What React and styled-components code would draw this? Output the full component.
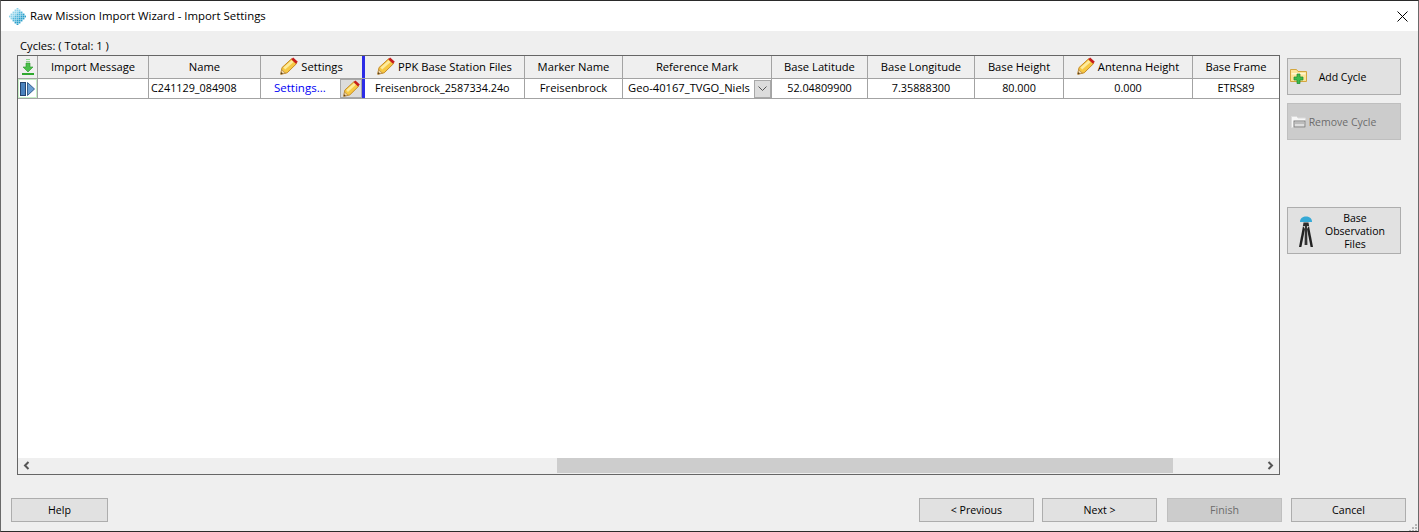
import React from "react";
import styled, { createGlobalStyle } from "styled-components";

const GlobalStyle = createGlobalStyle`
  html, body { margin: 0; padding: 0; background: #fff; }
  body { font-family: "Open Sans", "Noto Sans", sans-serif; font-size: 11.2px; color: #000; }
`;

const columns = "20px 111px 112px 104px 160px 98px 149px 96px 107px 89px 129px 86px";

const Pencil = ({ size = 18 }) => (
  <svg width={size} height={size} viewBox="0 0 18 18">
    <path d="M0.8 17.2 L2 10.6 L11.6 1.8 L16.6 6.6 L7.2 15.8 Z" fill="#f6c844" stroke="#c58a26" strokeWidth="1" strokeLinejoin="round" />
    <path d="M3.4 10.6 L11.6 3.2 L13.6 5 L5.2 12.6 Z" fill="#fdeb9c" />
    <path d="M0.8 17.2 L1.6 12.6 L5.4 16.2 Z" fill="#f0d6a8" stroke="#a87830" strokeWidth="0.6" />
    <path d="M0.8 17.2 L1.2 15 L3 16.7 Z" fill="#5a4020" />
    <path d="M11.2 2.2 L13.2 0.4 L17.8 4.8 L15.9 6.8 Z" fill="#c61c1c" />
  </svg>
);

const DownloadArrow = () => (
  <svg width="12" height="16" viewBox="0 0 12 16">
    <path d="M4 0h4v1H4zM4 2h4v1H4z" fill="#8fd48f" />
    <path d="M4 4h4v4h3l-5 5-5-5h3z" fill="#4cc04c" stroke="#2a962a" strokeWidth="0.6" />
    <path d="M0 14h12v2H0z" fill="#2ea82e" />
  </svg>
);

const PlayBar = () => (
  <svg width="15" height="14" viewBox="0 0 15 14">
    <rect x="0.5" y="0.5" width="5" height="13" fill="#4a82bd" stroke="#24446f" />
    <path d="M7.5 0.5 L14.5 7 L7.5 13.5 Z" fill="#6b9fd3" stroke="#34608f" />
  </svg>
);

const DotLogo = () => {
  const dots = [];
  for (let r = -4; r <= 4; r++) {
    for (let c = -4; c <= 4; c++) {
      if (Math.abs(r) + Math.abs(c) <= 4) {
        dots.push(
          <rect
            key={`${r}-${c}`}
            x={8 + c * 1.9 - 0.85}
            y={8 + r * 1.9 - 0.85}
            width="1.7"
            height="1.7"
            fill={c + r < -1 ? "#8ed2ea" : c + r > 1 ? "#2a9fca" : "#4fb5da"}
          />
        );
      }
    }
  }
  return (
    <svg width="17" height="17" viewBox="0 0 16 16">
      {dots}
    </svg>
  );
};

const CloseIcon = () => (
  <svg width="11" height="11" viewBox="0 0 11 11">
    <path d="M0.5 0.5 L10.5 10.5 M10.5 0.5 L0.5 10.5" stroke="#000" strokeWidth="1" />
  </svg>
);

const FolderPlus = () => (
  <svg width="17" height="15" viewBox="0 0 17 15">
    <path d="M0.5 0.5h6l1.5 2h8.5v10h-16z" fill="#fbe49a" stroke="#d3a63f" />
    <path d="M1.5 4h14v1.5h-14z" fill="#fff6cf" />
    <path d="M7 5h3v3h3v3h-3v3.5H7V11H4V8h3z" fill="#3dbb4b" stroke="#1b8a2c" strokeWidth="0.7" />
  </svg>
);

const FolderMinus = () => (
  <svg width="15" height="12" viewBox="0 0 15 12">
    <path d="M0.5 0.5h5l1.5 1.5h7.5v9.5h-14z" fill="#f7f7f7" stroke="#dcdcdc" />
    <rect x="3" y="5" width="11" height="6" fill="#dedede" stroke="#7f7f7f" />
    <path d="M4 7h9" stroke="#9a9a9a" />
  </svg>
);

const Tripod = () => (
  <svg width="18" height="31" viewBox="0 0 18 31">
    <path d="M3 6 C3 2 6 0.5 9 0.5 C12 0.5 15 2 15 6 Z" fill="#35a9d6" />
    <path d="M6.5 6.5h5l0.6 3.5H5.9z" fill="#2b2b2b" />
    <path d="M6 10 L2 31 L4.4 31 L8 13 Z" fill="#222" />
    <path d="M12 10 L16 31 L13.6 31 L10 13 Z" fill="#222" />
    <path d="M7.9 10h2.2l0.3 19H7.6z" fill="#333" />
  </svg>
);

const Chevron = ({ left }) => (
  <svg width="7" height="9" viewBox="0 0 7 9">
    <path d={left ? "M5.5 1 L2 4.5 L5.5 8" : "M1.5 1 L5 4.5 L1.5 8"} fill="none" stroke="#555" strokeWidth="2" />
  </svg>
);

const ComboChevron = () => (
  <svg width="9" height="5" viewBox="0 0 9 5">
    <path d="M0.5 0.5 L4.5 4.5 L8.5 0.5" fill="none" stroke="#555" strokeWidth="1" />
  </svg>
);

const App = () => {
  return (
    <>
      <GlobalStyle />
      <Window>
        <TitleBar>
          <TitleGroup>
            <DotLogo />
            <TitleText>Raw Mission Import Wizard - Import Settings</TitleText>
          </TitleGroup>
          <CloseIcon />
        </TitleBar>
        <Content>
          <CyclesLabel>Cycles: ( Total: 1 )</CyclesLabel>
          <MainRow>
            <TablePanel>
              <GridArea>
                <HeaderRow>
                  <GreenCell><DownloadArrow /></GreenCell>
                  <HeaderCell>Import Message</HeaderCell>
                  <HeaderCell>Name</HeaderCell>
                  <HeaderCell $frozen><Pencil />Settings</HeaderCell>
                  <HeaderCell><Pencil />PPK Base Station Files</HeaderCell>
                  <HeaderCell>Marker Name</HeaderCell>
                  <HeaderCell>Reference Mark</HeaderCell>
                  <HeaderCell>Base Latitude</HeaderCell>
                  <HeaderCell>Base Longitude</HeaderCell>
                  <HeaderCell>Base Height</HeaderCell>
                  <HeaderCell><Pencil />Antenna Height</HeaderCell>
                  <HeaderCell $last>Base Frame</HeaderCell>
                </HeaderRow>
                <DataRow>
                  <RowMarker><PlayBar /></RowMarker>
                  <DataCell />
                  <DataCell $left $num>C241129_084908</DataCell>
                  <SettingsCell $frozen>
                    <SettingsLink>Settings...</SettingsLink>
                    <EditButton><Pencil size={17} /></EditButton>
                  </SettingsCell>
                  <FileCell $num>Freisenbrock_2587334.24o</FileCell>
                  <DataCell>Freisenbrock</DataCell>
                  <ComboCell>
                    <span>Geo-40167_TVGO_Niels</span>
                    <ComboButton><ComboChevron /></ComboButton>
                  </ComboCell>
                  <DataCell $num>52.04809900</DataCell>
                  <DataCell $num>7.35888300</DataCell>
                  <DataCell $num>80.000</DataCell>
                  <DataCell $num>0.000</DataCell>
                  <DataCell $last $num>ETRS89</DataCell>
                </DataRow>
              </GridArea>
              <ScrollBar>
                <ScrollArrow><Chevron left /></ScrollArrow>
                <ScrollTrack>
                  <ScrollThumb />
                </ScrollTrack>
                <ScrollArrow><Chevron /></ScrollArrow>
              </ScrollBar>
            </TablePanel>
            <SideColumn>
              <SideButton>
                <SideIcon><FolderPlus /></SideIcon>
                <SideText>Add Cycle</SideText>
              </SideButton>
              <SideButton disabled>
                <SideIcon><FolderMinus /></SideIcon>
                <SideText>Remove Cycle</SideText>
              </SideButton>
              <BaseButton>
                <SideIcon><Tripod /></SideIcon>
                <BaseText>Base<br />Observation<br />Files</BaseText>
              </BaseButton>
            </SideColumn>
          </MainRow>
          <Footer>
            <FooterButton $w={97}>Help</FooterButton>
            <WizardButtons>
              <FooterButton>&lt; Previous</FooterButton>
              <FooterButton $nudge={-1}>Next &gt;</FooterButton>
              <FooterButton $nudge={1} disabled>Finish</FooterButton>
              <FooterButton>Cancel</FooterButton>
            </WizardButtons>
          </Footer>
          <ResizeGrip>
            <svg width="10" height="10" viewBox="0 0 10 10">
              <path d="M7 1h2v2H7zM4 4h2v2H4zM7 4h2v2H7zM1 7h2v2H1zM4 7h2v2H4zM7 7h2v2H7z" fill="#b5b5b5" />
            </svg>
          </ResizeGrip>
        </Content>
      </Window>
    </>
  );
};
export default App;

const Window = styled.div`
  position: relative;
  box-sizing: border-box;
  width: 1419px;
  height: 532px;
  display: flex;
  flex-direction: column;
  border: 1px solid #6a6a6a;
  border-top-color: #2a2a2a;
  border-bottom-color: #2a2a2a;
  overflow: hidden;
`;

const TitleBar = styled.div`
  height: 30px;
  flex: none;
  display: flex;
  align-items: center;
  justify-content: space-between;
  padding: 0 10px 0 8px;
  background: #fff;
`;

const TitleGroup = styled.div`
  display: flex;
  align-items: center;
  gap: 4px;
`;

const TitleText = styled.span`
  font-size: 11.4px;
  white-space: nowrap;
  margin-bottom: 2px;
`;

const Content = styled.div`
  position: relative;
  flex: 1;
  display: flex;
  flex-direction: column;
  background: #efefef;
  padding: 8px 12px 9px 10px;
`;

const CyclesLabel = styled.div`
  height: 16px;
  line-height: 14px;
  margin-left: 9px;
`;

const MainRow = styled.div`
  display: flex;
  gap: 7px;
  margin-left: 6px;
`;

const TablePanel = styled.div`
  box-sizing: border-box;
  width: 1263px;
  height: 420px;
  flex: none;
  display: flex;
  flex-direction: column;
  border: 1px solid #666;
`;

const GridArea = styled.div`
  flex: 1;
  background: #fff;
  overflow: hidden;
`;

const HeaderRow = styled.div`
  display: grid;
  grid-template-columns: ${columns};
  height: 23px;
  background: #efefef;
  border-bottom: 1px solid #a3a3a3;
  box-sizing: border-box;
`;

const DataRow = styled.div`
  display: grid;
  grid-template-columns: ${columns};
  height: 20px;
  box-sizing: border-box;
  border-bottom: 1px solid #a3a3a3;
`;

const HeaderCell = styled.div`
  display: flex;
  align-items: center;
  justify-content: center;
  gap: 3px;
  padding-bottom: 2px;
  white-space: nowrap;
  box-sizing: border-box;
  font-size: 11.2px;
  border-right: ${(props) =>
    props.$last ? "none" : props.$frozen ? "3px solid #2c2ce6" : "1px solid #a3a3a3"};
`;

const GreenCell = styled(HeaderCell)`
  padding-bottom: 0;
`;

const DataCell = styled.div`
  display: flex;
  align-items: center;
  justify-content: ${(props) => (props.$left ? "flex-start" : "center")};
  padding: 0 0 2px ${(props) => (props.$left ? "2px" : "0")};
  font-size: ${(props) => (props.$num ? "10.8px" : "11.2px")};
  white-space: nowrap;
  box-sizing: border-box;
  border-right: ${(props) =>
    props.$last ? "none" : props.$frozen ? "3px solid #2c2ce6" : "1px solid #a3a3a3"};
`;

const FileCell = styled(DataCell)`
  justify-content: flex-start;
  padding-left: 10px;
`;

const RowMarker = styled(DataCell)`
  padding-bottom: 0;
  background: #fff;
  box-shadow: inset 0 0 0 1px #c6efc6;
`;

const SettingsCell = styled(DataCell)`
  justify-content: space-between;
  padding: 0 0 0 13px;
  font-size: 11.5px;
`;

const SettingsLink = styled.span`
  color: #0000f5;
  margin-bottom: 2px;
`;

const EditButton = styled.div`
  box-sizing: border-box;
  width: 22px;
  height: 19px;
  display: flex;
  align-items: center;
  justify-content: center;
  background: #dcdcdc;
  border: 1px solid #a8a8a8;
`;

const ComboCell = styled(DataCell)`
  justify-content: space-between;
  padding: 0 0 0 5px;
  & > span {
    margin-bottom: 2px;
  }
`;

const ComboButton = styled.div`
  box-sizing: border-box;
  width: 17px;
  height: 18px;
  display: flex;
  align-items: center;
  justify-content: center;
  background: #dcdcdc;
  border: 1px solid #a8a8a8;
`;

const ScrollBar = styled.div`
  height: 15px;
  margin-bottom: 1px;
  flex: none;
  display: flex;
  background: #efefef;
`;

const ScrollArrow = styled.div`
  width: 17px;
  flex: none;
  display: flex;
  align-items: center;
  justify-content: center;
`;

const ScrollTrack = styled.div`
  flex: 1;
  display: flex;
  padding-left: 522px;
`;

const ScrollThumb = styled.div`
  width: 616px;
  background: #cdcdcd;
`;

const SideColumn = styled.div`
  width: 114px;
  flex: none;
  display: flex;
  flex-direction: column;
  gap: 8px;
  padding-top: 3px;
`;

const SideButton = styled.button`
  box-sizing: border-box;
  width: 114px;
  height: 37px;
  padding: 0 0 0 1px;
  display: grid;
  grid-template-columns: 18px 1fr;
  align-items: center;
  font-family: inherit;
  font-size: 10.5px;
  color: ${(props) => (props.disabled ? "#6d6d6d" : "#000")};
  background: ${(props) => (props.disabled ? "#cccccc" : "#e1e1e1")};
  border: 1px solid ${(props) => (props.disabled ? "#bfbfbf" : "#adadad")};
`;

const BaseButton = styled(SideButton)`
  height: 47px;
  margin-top: 59px;
  padding: 2px 0 0 0;
  grid-template-columns: 36px 1fr;
  line-height: 13px;
`;

const SideIcon = styled.span`
  display: flex;
  justify-content: center;
`;

const SideText = styled.span`
  text-align: center;
  padding-right: 22px;
`;

const BaseText = styled.span`
  text-align: center;
  padding-right: 14px;
`;

const Footer = styled.div`
  display: flex;
  justify-content: space-between;
  margin-top: 23px;
`;

const WizardButtons = styled.div`
  display: flex;
  gap: 9px;
`;

const FooterButton = styled.button`
  box-sizing: border-box;
  width: ${(props) => props.$w || 115}px;
  height: 24px;
  padding: 0;
  margin-left: ${(props) => props.$nudge || 0}px;
  font-family: inherit;
  font-size: 10.6px;
  color: ${(props) => (props.disabled ? "#6d6d6d" : "#000")};
  background: ${(props) => (props.disabled ? "#cccccc" : "#e1e1e1")};
  border: 1px solid ${(props) => (props.disabled ? "#bfbfbf" : "#adadad")};
`;

const ResizeGrip = styled.div`
  position: absolute;
  right: 0;
  bottom: 0;
  width: 10px;
  height: 10px;
`;
